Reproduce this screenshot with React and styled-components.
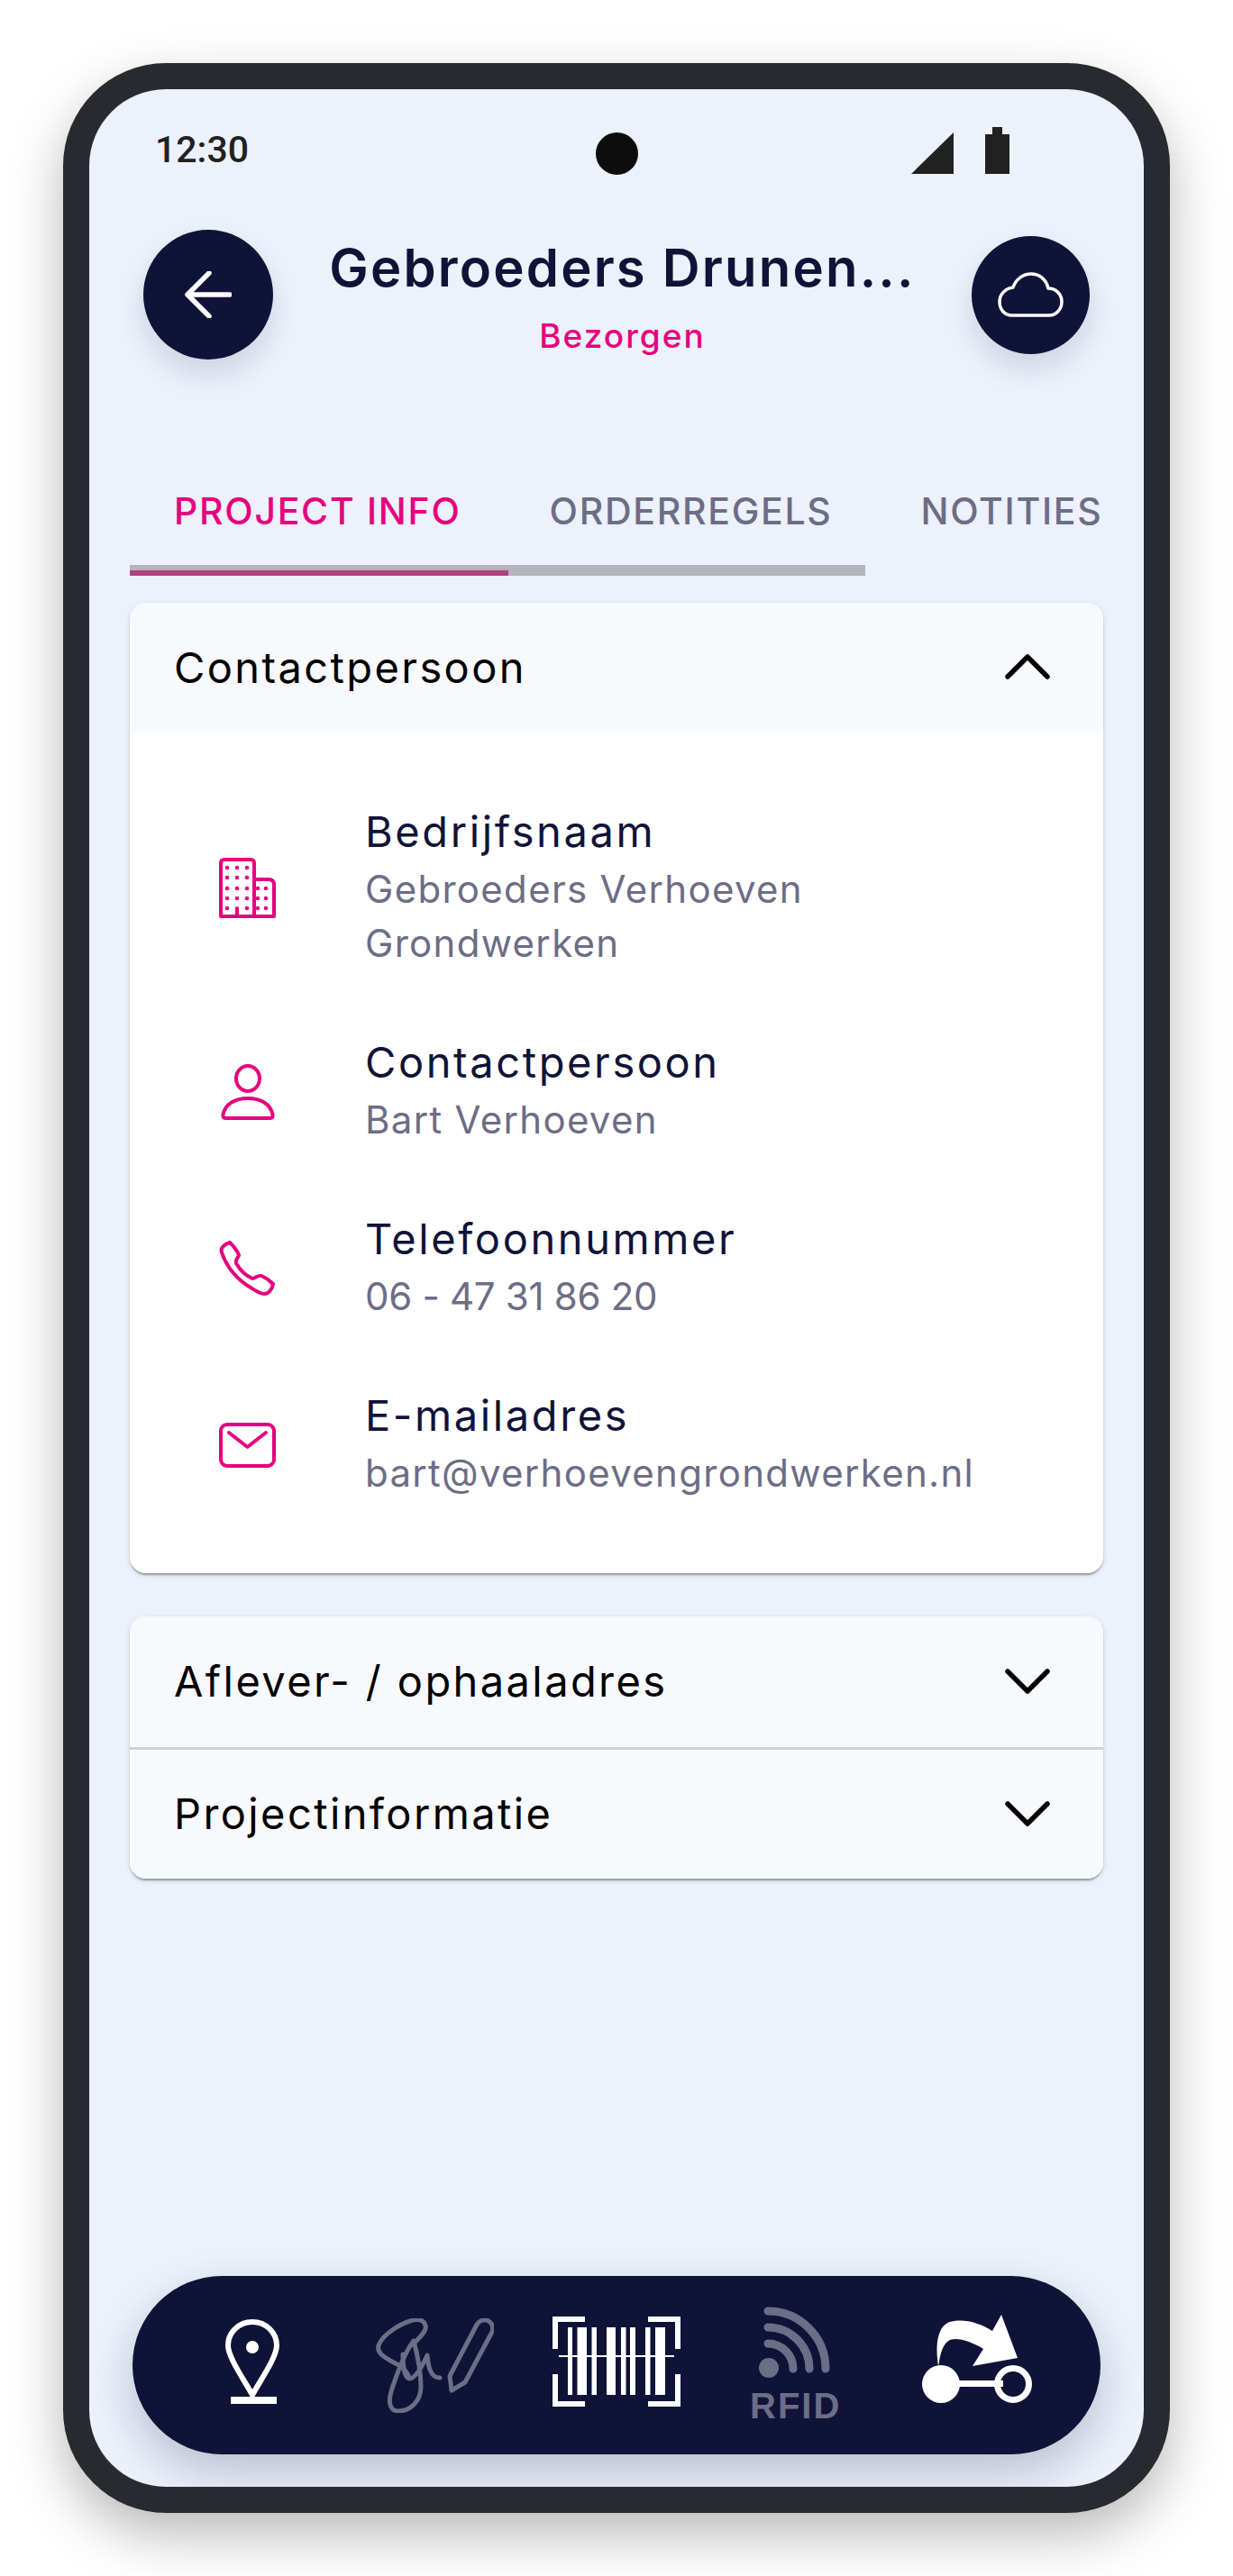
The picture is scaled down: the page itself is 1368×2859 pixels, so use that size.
import React from "react";
import styled, { createGlobalStyle } from "styled-components";

const PINK = "#e6007e";
const NAVY = "#101338";
const MUTED = "#6c6d86";

const Global = createGlobalStyle`
  html, body { margin: 0; padding: 0; background: #fff; }
  body { font-family: "Inter", "Liberation Sans", sans-serif; }
`;

const Page = styled.div`
  width: 1368px;
  height: 2859px;
  padding: 70px 70px 70px;
  box-sizing: border-box;
  overflow: hidden;
`;

const Phone = styled.div`
  width: 1228px;
  height: 2719px;
  box-sizing: border-box;
  padding: 29px;
  background: #292a2f;
  border-radius: 114px;
  box-shadow: 0 24px 60px rgba(0, 0, 0, 0.28);
`;

const Screen = styled.div`
  height: 100%;
  background: #ecf1fb;
  border-radius: 85px;
  overflow: hidden;
  display: flex;
  flex-direction: column;
`;

const StatusBar = styled.div`
  display: grid;
  grid-template-columns: 1fr auto 1fr;
  align-items: center;
  height: 55px;
  padding: 40px 73px 0;
  margin-bottom: 61px;
`;

const Clock = styled.div`
  font-family: "Roboto", sans-serif;
  font-size: 41px;
  font-weight: 500;
  line-height: 55px;
  color: #212121;
`;

const Camera = styled.div`
  width: 47px;
  height: 47px;
  border-radius: 50%;
  background: #0d0d0d;
  margin-top: 8px;
`;

const StatusIcons = styled.div`
  justify-self: end;
  display: flex;
  align-items: flex-end;
  gap: 35px;
  margin-right: 76px;
`;

const Header = styled.header`
  display: flex;
  align-items: center;
  padding: 0 60px;
  height: 144px;
`;

const RoundButton = styled.button`
  width: ${(p) => p.$size}px;
  height: ${(p) => p.$size}px;
  flex: none;
  border: 0;
  padding: 0;
  border-radius: 50%;
  background: ${NAVY};
  color: #fff;
  display: flex;
  align-items: center;
  justify-content: center;
  box-shadow: 0 16px 32px rgba(16, 19, 56, 0.13);
`;

const TitleBlock = styled.div`
  flex: 1;
  min-width: 0;
  padding-top: 4px;
  text-align: center;
`;

const Title = styled.h1`
  margin: 0;
  font-size: 58px;
  line-height: 72px;
  font-weight: 600;
  letter-spacing: 2.2px;
  color: ${NAVY};
  white-space: nowrap;
`;

const Status = styled.div`
  margin-top: 16px;
  font-size: 37px;
  font-weight: 500;
  line-height: 48px;
  letter-spacing: 2px;
  color: ${PINK};
`;

const Tabs = styled.nav`
  display: flex;
  gap: 98px;
  margin-top: 143px;
  padding-left: 94px;
  white-space: nowrap;
`;

const Tab = styled.span`
  font-size: 41px;
  line-height: 50px;
  font-weight: 500;
  letter-spacing: 1.7px;
  color: ${(p) => (p.$active ? PINK : MUTED)};
`;

const Track = styled.div`
  width: 816px;
  height: 12px;
  margin: 35px 0 0 45px;
  background: #b4b5ba;
  display: flex;
  align-items: flex-end;
`;

const TrackFill = styled.div`
  width: 420px;
  height: 6px;
  background: #b04080;
`;

const Card = styled.section`
  margin: ${(p) => p.$top}px 45px 0;
  border-radius: 18px;
  overflow: hidden;
  background: #fff;
  box-shadow: 0 4px 2px -2px rgba(0, 0, 0, 0.2), 0 2px 2px rgba(0, 0, 0, 0.14),
    0 2px 6px rgba(0, 0, 0, 0.12);
`;

const AccordionHead = styled.div`
  height: ${(p) => p.$height}px;
  box-sizing: border-box;
  padding: 0 59px 2px 49px;
  background: #f7f9fd;
  display: flex;
  align-items: center;
  justify-content: space-between;
  font-size: 47px;
  letter-spacing: 2.4px;
  color: #000;
  & + & {
    border-top: 3px solid #cfd1d8;
  }
`;

const Chevron = ({ up }) => (
  <svg width="50" height="28" viewBox="0 0 50 28" fill="none">
    <path
      d={up ? "M3 25 L25 3 L47 25" : "M3 3 L25 25 L47 3"}
      stroke="#000"
      strokeWidth="5.5"
      strokeLinecap="round"
      strokeLinejoin="round"
    />
  </svg>
);

const ContactList = styled.div`
  padding: 75px 40px 81px 0;
  display: flex;
  flex-direction: column;
  gap: 67px;
`;

const ContactRow = styled.div`
  display: flex;
  align-items: center;
`;

const ContactIcon = styled.div`
  width: 261px;
  flex: none;
  display: flex;
  justify-content: center;
  padding-top: 6px;
`;

const ContactLabel = styled.div`
  font-size: 47px;
  line-height: 69px;
  letter-spacing: 2.6px;
  color: ${NAVY};
`;

const ContactValue = styled.div`
  font-size: 42px;
  line-height: 60px;
  letter-spacing: ${(p) => (p.$digits ? "-0.3px" : "1.3px")};
  color: ${MUTED};
`;

const BottomNav = styled.nav`
  margin: auto 48px 36px;
  height: 198px;
  border-radius: 99px;
  background: ${NAVY};
  padding: 0 32px;
  display: grid;
  grid-template-columns: repeat(5, 1fr);
  box-shadow: 0 20px 50px rgba(16, 19, 56, 0.22);
`;

const NavSlot = styled.div`
  display: flex;
  align-items: center;
  justify-content: center;
  padding-bottom: ${(p) => p.$lift || 0}px;
  padding-right: ${(p) => p.$left || 0}px;
`;

const BuildingIcon = () => (
  <svg width="63" height="67" viewBox="0 0 63 67" fill="none" stroke={PINK} strokeWidth="4">
    <path d="M2 65 V6 Q2 2 6 2 H35 Q39 2 39 6 V65 Z" strokeLinejoin="round" />
    <path d="M39 24 H55 Q61 24 61 30 V65 H39" strokeLinejoin="round" />
    <path d="M20 56 V65" strokeLinecap="round" />
    <g fill={PINK} stroke="none">
      {[11, 22, 34, 45, 56].map((y) =>
        [9, 20, 31].map((x) =>
          x === 20 && y === 56 ? null : <circle key={`${x}-${y}`} cx={x} cy={y} r="2.3" />
        )
      )}
      {[34, 45, 56].map((y) =>
        [43, 52].map((x) => <circle key={`${x}-${y}`} cx={x} cy={y} r="2.3" />)
      )}
    </g>
  </svg>
);

const PersonIcon = () => (
  <svg width="60" height="62" viewBox="0 0 60 62" fill="none" stroke={PINK} strokeWidth="4">
    <ellipse cx="30" cy="16" rx="13" ry="14" />
    <path d="M5 60 Q2 60 2.5 56 C5 44 16 38 30 38 C44 38 55 44 57.5 56 Q58 60 55 60 Z" strokeLinejoin="round" />
  </svg>
);

const PhoneIcon = () => (
  <svg width="63" height="62" viewBox="0 0 63 62" fill="none" stroke={PINK} strokeWidth="4">
    <path
      d="M12 2 C16 6 20 11 22 16 C21 19 18 21 19 25 C23 32 30 39 37 42 C40 42 43 38 47 39 C52 41 56 44 60 48 C59 54 55 59 50 59 C45 59 40 55 35 52 C21 44 8 29 3 13 C1 8 6 4 12 2 Z"
      strokeLinejoin="round"
    />
  </svg>
);

const MailIcon = () => (
  <svg width="63" height="50" viewBox="0 0 63 50" fill="none" stroke={PINK} strokeWidth="4">
    <rect x="2" y="2" width="59" height="46" rx="7" />
    <path d="M11 11 L31.5 27 L52 11" strokeLinecap="round" strokeLinejoin="round" />
  </svg>
);

const CloudIcon = () => (
  <svg width="73" height="50" viewBox="0 0 73 50" fill="none" stroke="#fff" strokeWidth="3.5" strokeLinejoin="round">
    <path d="M16 48 C7 48 2 41 2 33 C2 25 8 18 17 17 C20 8 28 2 37 2 C47 2 54 9 56 18 C65 18 71 25 71 33 C71 41 65 48 57 48 Z" />
  </svg>
);

const PinIcon = () => (
  <svg width="60" height="94" viewBox="0 0 60 94" fill="none">
    <path d="M30 84 C20 66 3 42 3 29 A27 26 0 0 1 57 29 C57 42 40 66 30 84 Z" stroke="#fff" strokeWidth="6" />
    <circle cx="30" cy="31" r="7" fill="#fff" />
    <rect x="6" y="86" width="51" height="8" fill="#fff" />
  </svg>
);

const SignatureIcon = () => (
  <svg width="131" height="105" viewBox="0 0 131 105" fill="none" stroke={MUTED} strokeWidth="5" strokeLinecap="round" strokeLinejoin="round">
    <path d="M42 25 C34 35 24 60 18 78 C13 92 15 103 25 103 C38 103 50 92 50 76 C50 62 46 40 42 25 Z" />
    <path d="M30 40 C30 55 32 66 37 67 C44 67 52 52 57 41 C58 52 60 66 71 66" />
    <path d="M43 27 C50 20 57 13 55 8 C53 1 46 0 38 3 C28 6 8 17 3 30 C1 38 8 42 16 47 C24 51 34 56 37 66" />
    <path d="M82 64 L112 7 Q116 1 123 2 Q132 6 129 15 L99 71 L84 80 Z" />
  </svg>
);

const BARS = [
  [17, 5],
  [27.5, 10.5],
  [43.5, 5.5],
  [60, 10],
  [76, 5.5],
  [86, 6],
  [103, 5.5],
  [114, 11],
];

const BarcodeIcon = () => (
  <svg width="142" height="100" viewBox="0 0 142 100" fill="#fff">
    <path d="M0 0 H36 V6 H6 V36 H0 Z M142 0 H106 V6 H136 V36 H142 Z M0 100 H36 V94 H6 V64 H0 Z M142 100 H106 V94 H136 V64 H142 Z" />
    {BARS.map(([x, w]) => (
      <rect key={x} x={x} y="12" width={w} height="75" />
    ))}
    <rect x="7" y="43" width="128" height="2" />
  </svg>
);

const RfidIcon = () => (
  <svg width="104" height="125" viewBox="0 0 104 125">
    <circle cx="21" cy="68" r="11" fill={MUTED} />
    <g fill="none" stroke={MUTED} strokeWidth="9" strokeLinecap="round">
      <path d="M20 41 A28 28 0 0 1 48 69" />
      <path d="M20 23 A46 46 0 0 1 66 69" />
      <path d="M20 5 A64 64 0 0 1 84 69" />
    </g>
    <text x="0" y="124" fontFamily="Liberation Sans" fontWeight="700" fontSize="40" letterSpacing="2" fill={MUTED}>
      RFID
    </text>
  </svg>
);

const RouteIcon = () => (
  <svg width="122" height="98" viewBox="0 0 122 98">
    <path fill="#fff" d="M18 56 C14 30 18 8 36 7 C50 5 65 10 78 18 L88 0 L106 48 L56 57 L68 38 C55 30 40 25 31 28 C24 31 20 42 18.5 56 Z" />
    <circle cx="21" cy="77" r="21" fill="#fff" />
    <rect x="30" y="73" width="60" height="7" fill="#fff" />
    <circle cx="101" cy="77" r="17.5" fill="none" stroke="#fff" strokeWidth="7" />
  </svg>
);

const contacts = [
  { Icon: BuildingIcon, label: "Bedrijfsnaam", value: ["Gebroeders Verhoeven", "Grondwerken"] },
  { Icon: PersonIcon, label: "Contactpersoon", value: ["Bart Verhoeven"] },
  { Icon: PhoneIcon, label: "Telefoonnummer", value: ["06 - 47 31 86 20"], digits: true },
  { Icon: MailIcon, label: "E-mailadres", value: ["bart@verhoevengrondwerken.nl"] },
];

export default function App() {
  return (
    <Page>
      <Global />
      <Phone>
        <Screen>
          <StatusBar>
            <Clock>12:30</Clock>
            <Camera />
            <StatusIcons>
              <svg width="47" height="46" viewBox="0 0 47 46">
                <path d="M47 0 V46 H0 Z" fill="#212121" />
              </svg>
              <svg width="27" height="52" viewBox="0 0 27 52">
                <path d="M8 0 H19 V8 H27 V52 H0 V8 H8 Z" fill="#212121" />
              </svg>
            </StatusIcons>
          </StatusBar>

          <Header>
            <RoundButton $size={144}>
              <svg width="52" height="52" viewBox="0 0 52 52" fill="none" stroke="#fff" strokeWidth="5.5" strokeLinecap="round" strokeLinejoin="round">
                <path d="M50 26 H3 M27 2 L3 26 L27 50" />
              </svg>
            </RoundButton>
            <TitleBlock>
              <Title>Gebroeders Drunen...</Title>
              <Status>Bezorgen</Status>
            </TitleBlock>
            <RoundButton $size={131}>
              <CloudIcon />
            </RoundButton>
          </Header>

          <Tabs>
            <Tab $active>PROJECT INFO</Tab>
            <Tab>ORDERREGELS</Tab>
            <Tab>NOTITIES</Tab>
          </Tabs>
          <Track>
            <TrackFill />
          </Track>

          <Card $top={30}>
            <AccordionHead $height={144}>
              Contactpersoon
              <Chevron up />
            </AccordionHead>
            <ContactList>
              {contacts.map(({ Icon, label, value, digits }) => (
                <ContactRow key={label}>
                  <ContactIcon>
                    <Icon />
                  </ContactIcon>
                  <div>
                    <ContactLabel>{label}</ContactLabel>
                    {value.map((line) => (
                      <ContactValue key={line} $digits={digits}>
                        {line}
                      </ContactValue>
                    ))}
                  </div>
                </ContactRow>
              ))}
            </ContactList>
          </Card>

          <Card $top={48}>
            <AccordionHead $height={145}>
              Aflever- / ophaaladres
              <Chevron />
            </AccordionHead>
            <AccordionHead $height={146}>
              Projectinformatie
              <Chevron />
            </AccordionHead>
          </Card>

          <BottomNav>
            <NavSlot $lift={8}>
              <PinIcon />
            </NavSlot>
            <NavSlot>
              <SignatureIcon />
            </NavSlot>
            <NavSlot $lift={8}>
              <BarcodeIcon />
            </NavSlot>
            <NavSlot $lift={6} $left={4}>
              <RfidIcon />
            </NavSlot>
            <NavSlot $lift={14} $left={8}>
              <RouteIcon />
            </NavSlot>
          </BottomNav>
        </Screen>
      </Phone>
    </Page>
  );
}
